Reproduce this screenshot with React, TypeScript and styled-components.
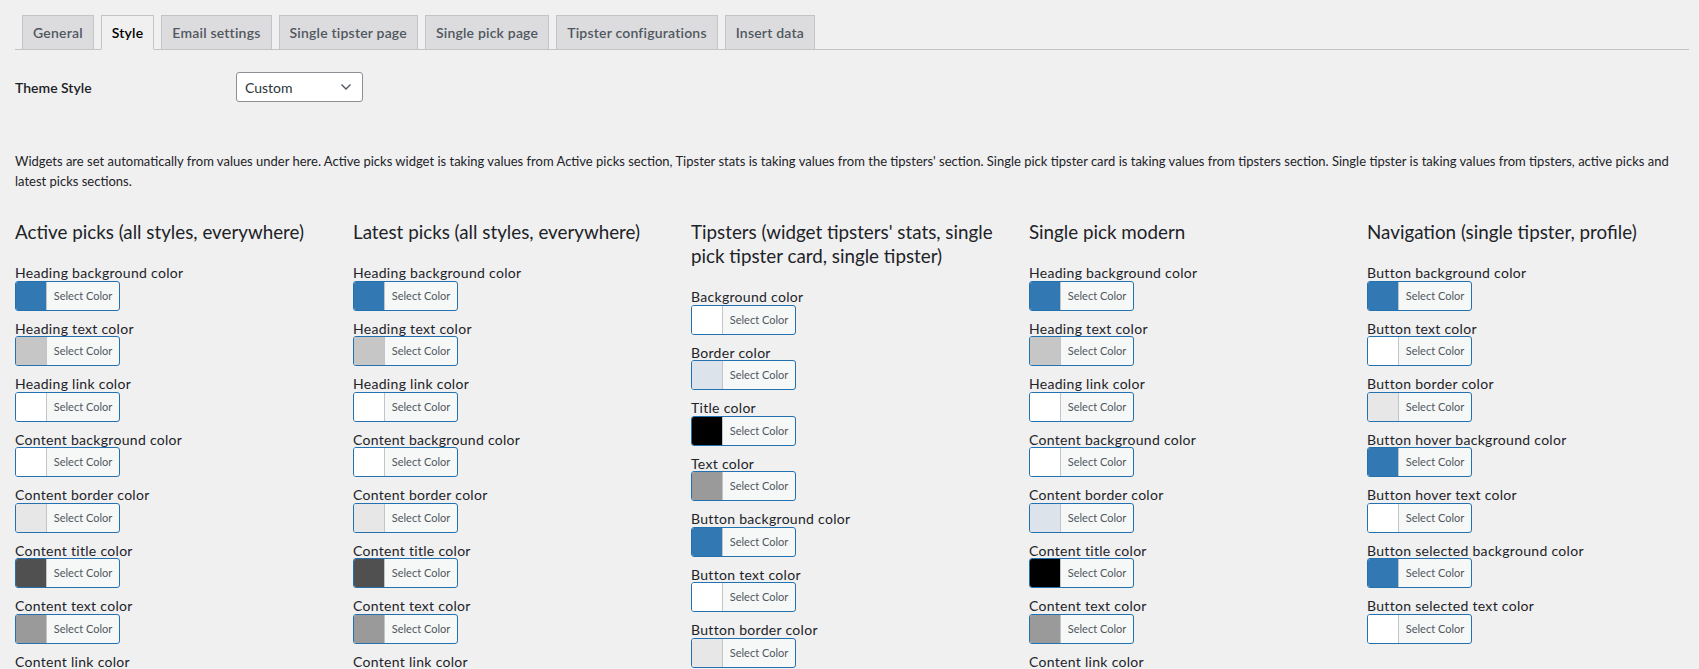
import React from "react";
import styled, { createGlobalStyle } from "styled-components";

const GlobalStyle = createGlobalStyle`
  html, body {
    margin: 0;
    padding: 0;
    overflow: hidden;
  }
  body {
    background: #f0f0f1;
    color: #1d2327;
    font-family: Lato, "Noto Sans", sans-serif;
    font-size: 13px;
  }
`;

const Page = styled.div`
  padding: 0 10px 0 15px;
`;

const TabBar = styled.nav`
  display: flex;
  align-items: flex-end;
  padding-top: 15px;
  border-bottom: 1px solid #c3c4c7;
`;

const Tab = styled.a<{ $active?: boolean }>`
  display: block;
  margin-left: 7px;
  margin-bottom: -1px;
  padding: 0 10px;
  height: 33px;
  line-height: 33px;
  font-size: 14px;
  font-weight: 600;
  letter-spacing: 0.2px;
  text-decoration: none;
  white-space: nowrap;
  border: 1px solid #c3c4c7;
  background: ${(p) => (p.$active ? "#f0f0f1" : "#dcdcde")};
  border-bottom-color: ${(p) => (p.$active ? "#f0f0f1" : "#c3c4c7")};
  color: ${(p) => (p.$active ? "#000" : "#50575e")};
`;

const ThemeRow = styled.div`
  display: grid;
  grid-template-columns: 221px auto;
  align-items: center;
  margin-top: 22px;
`;

const RowLabel = styled.div`
  font-size: 14px;
  font-weight: 600;
  color: #1d2327;
`;

const Select = styled.div`
  box-sizing: border-box;
  width: 127px;
  height: 30px;
  display: flex;
  align-items: center;
  justify-content: space-between;
  padding: 0 10px 0 8px;
  border: 1px solid #8c8f94;
  border-radius: 3px;
  background: #fff;
  font-size: 14px;
  color: #2c3338;
`;

const Description = styled.p`
  margin: 50px 0 0;
  line-height: 19.5px;
  font-size: 13px;
  color: #1d2327;
`;

const Columns = styled.div`
  display: grid;
  grid-template-columns: repeat(5, 338px);
  margin-top: 29px;
`;

const Column = styled.section`
  padding-right: 20px;
`;

const ColumnTitle = styled.h3`
  margin: 0 0 17px;
  font-size: 18.8px;
  font-weight: 400;
  line-height: 24px;
  color: #1d2327;
`;

const Field = styled.div`
  display: flex;
  flex-direction: column;
  align-items: flex-start;
  margin-bottom: 6px;
`;

const FieldLabel = styled.label`
  font-size: 14px;
  line-height: 19.5px;
  letter-spacing: 0.3px;
  padding-top: 2px;
  margin-bottom: -2px;
  color: #1d2327;
`;

const ColorButton = styled.button`
  box-sizing: border-box;
  display: flex;
  width: 105px;
  height: 30px;
  padding: 0;
  border: 1px solid #2271b1;
  border-radius: 3px;
  overflow: hidden;
  background: #f6f7f7;
  cursor: pointer;
`;

const Swatch = styled.span<{ $color: string }>`
  width: 30px;
  flex: none;
  background: ${(p) => p.$color};
`;

const ButtonText = styled.span`
  flex: 1;
  border-left: 1px solid #c3c4c7;
  font-family: Lato, "Noto Sans", sans-serif;
  font-size: 11px;
  line-height: 28px;
  color: #50575e;
  text-align: center;
`;

const BLUE = "#3279b4";
const GREY = "#c6c6c6";
const WHITE = "#ffffff";
const LIGHT = "#e7e7e7";
const BLUISH = "#dce3ea";
const DARK = "#505050";
const MID = "#9a9a9a";

const tabs = [
  "General",
  "Style",
  "Email settings",
  "Single tipster page",
  "Single pick page",
  "Tipster configurations",
  "Insert data",
];

const sections: { title: string; fields: [string, string][] }[] = [
  {
    title: "Active picks (all styles, everywhere)",
    fields: [
      ["Heading background color", BLUE],
      ["Heading text color", GREY],
      ["Heading link color", WHITE],
      ["Content background color", WHITE],
      ["Content border color", LIGHT],
      ["Content title color", DARK],
      ["Content text color", MID],
      ["Content link color", BLUE],
    ],
  },
  {
    title: "Latest picks (all styles, everywhere)",
    fields: [
      ["Heading background color", BLUE],
      ["Heading text color", GREY],
      ["Heading link color", WHITE],
      ["Content background color", WHITE],
      ["Content border color", LIGHT],
      ["Content title color", DARK],
      ["Content text color", MID],
      ["Content link color", BLUE],
    ],
  },
  {
    title: "Tipsters (widget tipsters' stats, single pick tipster card, single tipster)",
    fields: [
      ["Background color", WHITE],
      ["Border color", BLUISH],
      ["Title color", "#000000"],
      ["Text color", MID],
      ["Button background color", BLUE],
      ["Button text color", WHITE],
      ["Button border color", LIGHT],
    ],
  },
  {
    title: "Single pick modern",
    fields: [
      ["Heading background color", BLUE],
      ["Heading text color", GREY],
      ["Heading link color", WHITE],
      ["Content background color", WHITE],
      ["Content border color", BLUISH],
      ["Content title color", "#000000"],
      ["Content text color", MID],
      ["Content link color", BLUE],
    ],
  },
  {
    title: "Navigation (single tipster, profile)",
    fields: [
      ["Button background color", BLUE],
      ["Button text color", WHITE],
      ["Button border color", LIGHT],
      ["Button hover background color", BLUE],
      ["Button hover text color", WHITE],
      ["Button selected background color", BLUE],
      ["Button selected text color", WHITE],
    ],
  },
];

const Chevron = () => (
  <svg width="12" height="8" viewBox="0 0 12 8" fill="none">
    <path d="M1.5 1.5L6 6l4.5-4.5" stroke="#50575e" strokeWidth="1.4" />
  </svg>
);

const App: React.FC = () => {
  return (
    <Page>
      <GlobalStyle />
      <TabBar>
        {tabs.map((t) => (
          <Tab key={t} $active={t === "Style"}>
            {t}
          </Tab>
        ))}
      </TabBar>

      <ThemeRow>
        <RowLabel>Theme Style</RowLabel>
        <Select>
          <span>Custom</span>
          <Chevron />
        </Select>
      </ThemeRow>

      <Description>
        Widgets are set automatically from values under here. Active picks widget is taking values
        from Active picks section, Tipster stats is taking values from the tipsters' section. Single
        pick tipster card is taking values from tipsters section. Single tipster is taking values
        from tipsters, active picks and latest picks sections.
      </Description>

      <Columns>
        {sections.map((s) => (
          <Column key={s.title}>
            <ColumnTitle>{s.title}</ColumnTitle>
            {s.fields.map(([label, color]) => (
              <Field key={label}>
                <FieldLabel>{label}</FieldLabel>
                <ColorButton type="button">
                  <Swatch $color={color} />
                  <ButtonText>Select Color</ButtonText>
                </ColorButton>
              </Field>
            ))}
          </Column>
        ))}
      </Columns>
    </Page>
  );
};

export default App;
